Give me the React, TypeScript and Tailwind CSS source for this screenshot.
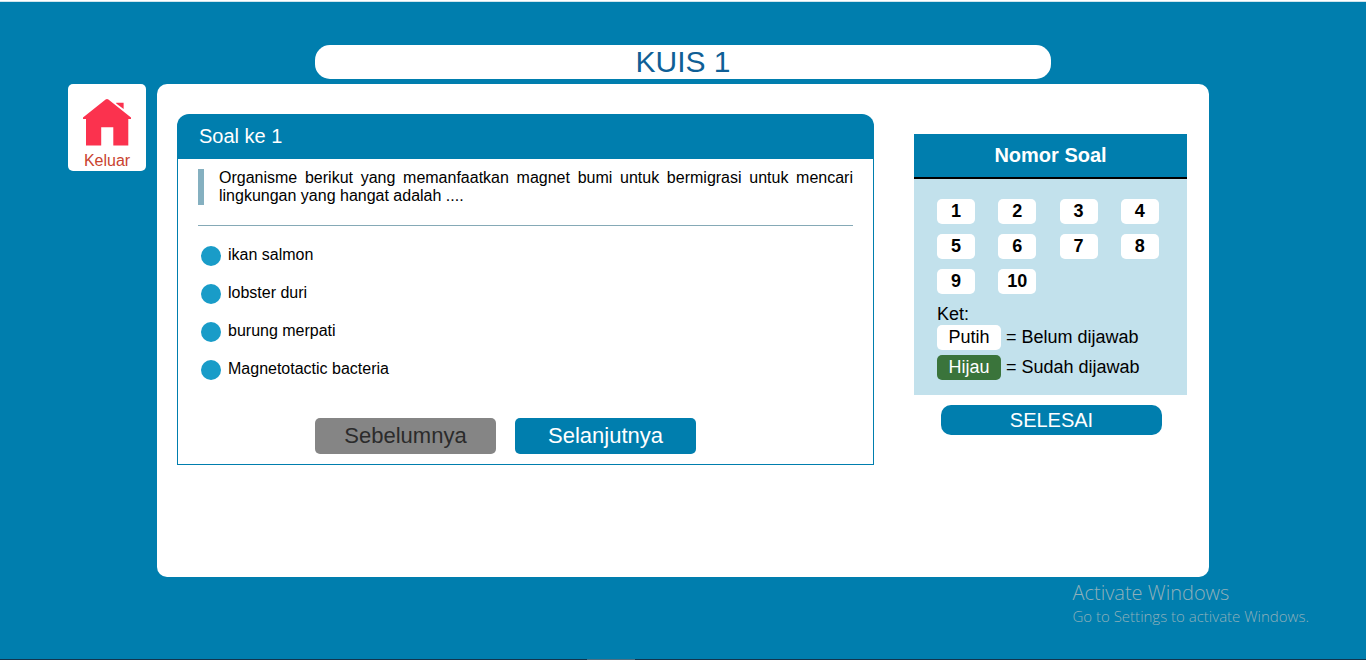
import { useState } from "react";

const options = ["ikan salmon", "lobster duri", "burung merpati", "Magnetotactic bacteria"];
const numbers = Array.from({ length: 10 }, (_, i) => i + 1);

function HouseIcon() {
  return (
    <svg viewBox="0 0 48 47" className="h-[47px] w-12" fill="#fb324e" aria-hidden="true">
      <path d="M22.6 0.5 Q24 -0.5 25.4 0.5 L48 18.4 V20 H45.3 V46.5 H30.3 V28.2 H18.2 V46.5 H3 V20 H0 V18.4 Z" />
      <path d="M33.2 3.8 H40.6 V10 L33.2 4.4 Z" />
    </svg>
  );
}

function Question() {
  const [answer, setAnswer] = useState<string | null>(null);
  return (
    <section className="min-w-0 flex-1">
      <h2 className="rounded-t-xl bg-[#007eae] px-[22px] text-[20px] leading-[45px] text-white">Soal ke 1</h2>
      <div className="border-x border-b border-[#007eae] px-5 py-2.5">
        <blockquote className="border-l-[6px] border-[#85b0c0] pl-[15px] text-justify text-[16px] leading-[18px]">
          Organisme berikut yang memanfaatkan magnet bumi untuk bermigrasi untuk mencari lingkungan yang hangat
          adalah ....
        </blockquote>
        <hr className="mt-5 border-[#85a9b6]" />
        <div role="radiogroup" aria-label="Jawaban" className="mt-5 flex flex-col gap-[18px] pl-[3px]">
          {options.map((option) => (
            <label key={option} className="flex h-5 cursor-pointer items-center gap-[7px] text-[16px] leading-4">
              <input
                type="radio"
                name="answer"
                checked={answer === option}
                onChange={() => setAnswer(option)}
                className="size-5 shrink-0 appearance-none rounded-full bg-[#199cc8] checked:border-[6px] checked:border-[#0b5f7e]"
              />
              <span className="pb-[3px]">{option}</span>
            </label>
          ))}
        </div>
        <div className="mt-[38px] flex justify-center gap-[19px] pr-10 text-[22px] leading-9">
          <button type="button" disabled className="w-[181px] rounded-[5px] bg-[#858585] text-[#2b2b2b]">
            Sebelumnya
          </button>
          <button type="button" className="w-[181px] rounded-[5px] bg-[#007eae] text-white">
            Selanjutnya
          </button>
        </div>
      </div>
    </section>
  );
}

function Numbers() {
  return (
    <aside className="mt-5 w-[273px] shrink-0">
      <h2 className="border-b-2 border-black bg-[#007eae] text-center text-[20px] leading-[43px] font-bold text-white">
        Nomor Soal
      </h2>
      <div className="bg-[#c2e1ec] pt-5 pr-[5px] pb-[15px] pl-[23px] text-[18px]">
        <div className="grid grid-cols-4 gap-y-2.5">
          {numbers.map((n) => (
            <button key={n} type="button" className="w-[38px] rounded-[5px] bg-white leading-[25px] font-bold">
              {n}
            </button>
          ))}
        </div>
        <p className="mt-2.5 leading-[21px]">Ket:</p>
        <div className="flex flex-col gap-[5px] leading-[25px]">
          <p className="flex gap-[5px]">
            <span className="w-16 rounded-[5px] bg-white text-center">Putih</span>= Belum dijawab
          </p>
          <p className="flex gap-[5px]">
            <span className="w-16 rounded-[5px] bg-[#3a743b] text-center text-white">Hijau</span>= Sudah dijawab
          </p>
        </div>
      </div>
      <div className="flex pt-2.5 pr-[25px] pl-[27px]">
        <button type="button" className="flex-1 rounded-[10px] bg-[#007eae] text-[20px] leading-[30px] text-white">
          SELESAI
        </button>
      </div>
    </aside>
  );
}

export default function App() {
  return (
    <div className="flex min-h-screen flex-col bg-[#007eae] font-['Liberation_Sans',Arial,sans-serif] text-black">
      <div className="h-0.5 border-t border-white bg-[#cfe4ec]" />
      <h1 className="mx-auto mt-[43px] w-[736px] max-w-full rounded-[15px] bg-white text-center text-[30px] leading-[34px] text-[#0f5f96]">
        KUIS 1
      </h1>
      <div className="mt-[5px] flex items-start gap-[11px] pr-[157px] pl-[68px]">
        <a
          href="#keluar"
          className="flex w-[78px] shrink-0 flex-col items-center gap-[5px] rounded-[5px] bg-white pt-[15px] pb-px text-[16px] leading-[19px] text-[#c9432f]"
        >
          <HouseIcon />
          Keluar
        </a>
        <main className="flex min-h-[493px] min-w-0 flex-1 items-start gap-10 rounded-[10px] bg-white pt-[30px] pr-[22px] pb-5 pl-5">
          <Question />
          <Numbers />
        </main>
      </div>
      <div className="mt-1 self-end pr-[57px] font-['Open_Sans','Noto_Sans',sans-serif] font-light text-[#8fb0ba]">
        <p className="text-[20px] leading-6">Activate Windows</p>
        <p className="text-[15px] leading-[22px]">Go to Settings to activate Windows.</p>
      </div>
      <div className="mt-auto flex h-px bg-[#12344d]">
        <div className="ml-[43%] w-12 bg-[#4f6f82]" />
      </div>
    </div>
  );
}
